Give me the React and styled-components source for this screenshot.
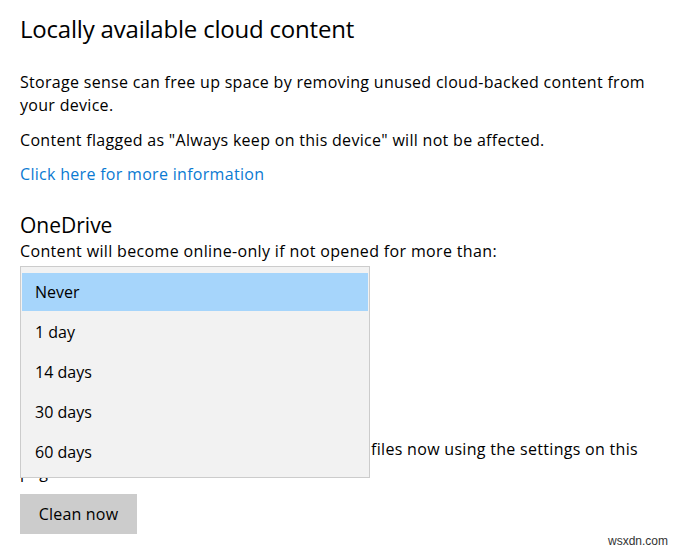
import React from "react";
import styled, { createGlobalStyle } from "styled-components";

const GlobalStyle = createGlobalStyle`
  html, body { margin: 0; padding: 0; background: #ffffff; }
  body { font-family: "Open Sans", "Noto Sans", sans-serif; color: #000; }
`;

const Page = styled.div`
  position: relative;
  width: 680px;
  height: 551px;
  box-sizing: border-box;
  padding: 13px 20px 0 20px;
  display: flex;
  flex-direction: column;
  overflow: hidden;
`;

const Title = styled.h1`
  margin: 0;
  font-size: 24px;
  font-weight: 400;
  line-height: 32px;
  letter-spacing: -0.2px;
`;

const Para = styled.p`
  margin: ${(p) => p.$mt || 0}px 0 0 0;
  font-size: 16px;
  line-height: 23px;
  letter-spacing: 0.3px;
  max-width: 640px;
`;

const Link = styled.a`
  display: block;
  margin-top: 11px;
  font-size: 16px;
  line-height: 23px;
  letter-spacing: 0.3px;
  color: #0a7ad2;
  text-decoration: none;
`;

const Section = styled.h2`
  margin: 26px 0 0 0;
  font-size: 21px;
  font-weight: 400;
  line-height: 26px;
`;

const Label = styled.div`
  margin-top: 2px;
  font-size: 16px;
  line-height: 22px;
  letter-spacing: 0.35px;
`;

const ComboWrap = styled.div`
  position: relative;
  margin-top: 4px;
  width: 260px;
  height: 32px;
`;

const ComboBox = styled.div`
  box-sizing: border-box;
  height: 32px;
  border: 2px solid #999;
  padding: 0 10px;
  font-size: 15px;
  line-height: 28px;
`;

const Popup = styled.ul`
  position: absolute;
  top: 0;
  left: 0;
  z-index: 2;
  width: 350px;
  box-sizing: border-box;
  margin: 0;
  padding: 6px 1px 6px 1px;
  list-style: none;
  background: #f2f2f2;
  border: 1px solid #cccccc;
  display: flex;
  flex-direction: column;
  gap: 2px;
`;

const Item = styled.li`
  height: 38px;
  box-sizing: border-box;
  padding: 0 13px;
  display: flex;
  align-items: center;
  font-size: 16px;
  background: ${(p) => (p.$selected ? "#a6d5fb" : "transparent")};
`;

const Hidden = styled.h2`
  margin: 110px 0 0 0;
  font-size: 20px;
  font-weight: 400;
  line-height: 26px;
`;

const Button = styled.button`
  align-self: flex-start;
  margin-top: 10px;
  width: 117px;
  height: 40px;
  border: none;
  background: #cccccc;
  font-family: inherit;
  font-size: 16px;
  letter-spacing: 0.2px;
  color: #000;
  padding: 0;
`;

const Watermark = styled.div`
  position: absolute;
  right: 12px;
  bottom: 3px;
  font-family: "Liberation Sans", sans-serif;
  font-size: 12px;
  color: #333;
`;

const options = ["Never", "1 day", "14 days", "30 days", "60 days"];

export default function App() {
  return (
    <>
      <GlobalStyle />
      <Page>
        <Title>Locally available cloud content</Title>
        <Para $mt={26}>
          Storage sense can free up space by removing unused cloud-backed content from your device.
        </Para>
        <Para $mt={12}>Content flagged as "Always keep on this device" will not be affected.</Para>
        <Link href="#">Click here for more information</Link>
        <Section>OneDrive</Section>
        <Label>Content will become online-only if not opened for more than:</Label>
        <ComboWrap>
          <ComboBox>Never</ComboBox>
          <Popup>
            {options.map((o, i) => (
              <Item key={o} $selected={i === 0}>
                {o}
              </Item>
            ))}
          </Popup>
        </ComboWrap>
        <Hidden>Free up space now</Hidden>
        <Para $mt={4}>
          If you're low on space, we can try to clean up files now using the settings on this page.
        </Para>
        <Button>Clean now</Button>
        <Watermark>wsxdn.com</Watermark>
      </Page>
    </>
  );
}
